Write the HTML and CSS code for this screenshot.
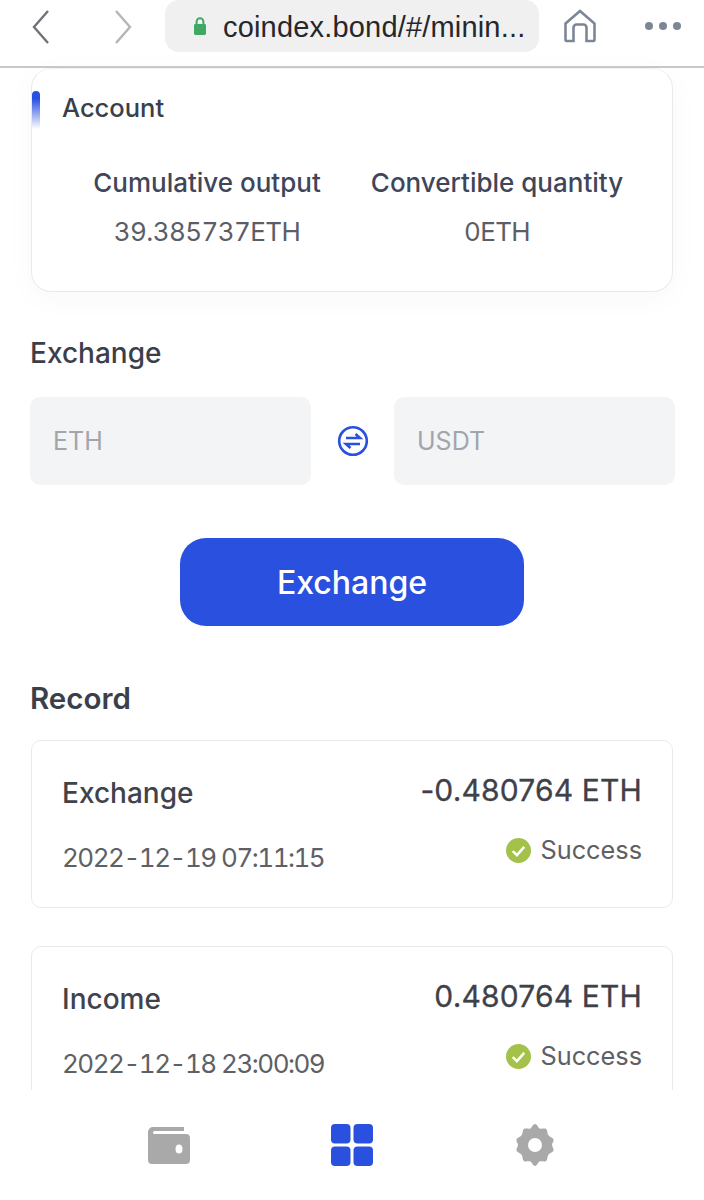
FILE: index.html
```html
<!DOCTYPE html>
<html lang="en">
<head>
<meta charset="utf-8">
<title>coindex.bond mining</title>
<link rel="stylesheet" href="styles.css">
</head>
<body>
<div class="phone">
  <header class="browser">
    <svg class="nav-arrow back" viewBox="0 0 20 36"><path d="M17 2 3 18l14 16"/></svg>
    <svg class="nav-arrow forward" viewBox="0 0 20 36"><path d="M3 2l14 16L3 34"/></svg>
    <div class="url">
      <svg class="lock" viewBox="0 0 14 20"><path class="shackle" d="M3.6 9V5.6a3.4 3.4 0 0 1 6.800 0V9"/><rect x="1" y="8" width="12" height="11" rx="1.4"/></svg>
      <span class="url-text">coindex.bond/#/minin...</span>
    </div>
    <svg class="home" viewBox="0 0 34 34"><path d="M2.500 14.500 17 2l14.500 12.500V31a1 1 0 0 1-1 1h-7V18.500a3 3 0 0 0-3-3h-7a3 3 0 0 0-3 3V32h-7a1 1 0 0 1-1-1z"/></svg>
    <div class="dots"><i></i><i></i><i></i></div>
  </header>

  <main class="content">
    <section class="account">
      <h2 class="account-title">Account</h2>
      <div class="stats">
        <div class="stat stat-a"><div class="stat-label">Cumulative output</div><div class="stat-value">39.385737ETH</div></div>
        <div class="stat stat-b"><div class="stat-label">Convertible quantity</div><div class="stat-value">0ETH</div></div>
      </div>
    </section>

    <h3 class="exchange-title">Exchange</h3>
    <div class="exchange-row">
      <div class="field">ETH</div>
      <svg class="swap" viewBox="0 0 32 32"><circle cx="16" cy="16" r="13.800"/><path d="M9 13h14l-4.500-4M23 19H9l4.500 4"/></svg>
      <div class="field">USDT</div>
    </div>
    <div class="button-row"><button class="exchange-btn">Exchange</button></div>

    <h3 class="record-title">Record</h3>
    <article class="record">
      <div class="record-col">
        <div class="record-type">Exchange</div>
        <div class="record-date">2022-12-19 07:11:15</div>
      </div>
      <div class="record-col right">
        <div class="record-amount">-0.480764 ETH</div>
        <div class="record-status"><svg class="check" viewBox="0 0 24 24"><circle cx="12" cy="12" r="12"/><path d="M6.500 12.500l4 4 7-8"/></svg>Success</div>
      </div>
    </article>
    <article class="record">
      <div class="record-col">
        <div class="record-type">Income</div>
        <div class="record-date">2022-12-18 23:00:09</div>
      </div>
      <div class="record-col right">
        <div class="record-amount">0.480764 ETH</div>
        <div class="record-status"><svg class="check" viewBox="0 0 24 24"><circle cx="12" cy="12" r="12"/><path d="M6.500 12.500l4 4 7-8"/></svg>Success</div>
      </div>
    </article>
  </main>

  <nav class="tabbar">
    <svg class="tab tab-wallet" viewBox="0 0 42 38"><path d="M5 1h31v4H6.500a1.500 1.500 0 0 0 0 3H38a4 4 0 0 1 4 4v22a4 4 0 0 1-4 4H4a4 4 0 0 1-4-4V6a5 5 0 0 1 5-5z"/><ellipse class="hole" cx="31" cy="23" rx="3.500" ry="4.500"/></svg>
    <svg class="tab tab-grid" viewBox="0 0 42 42"><rect width="19.500" height="19.500" rx="4"/><rect x="22.500" width="19.500" height="19.500" rx="4"/><rect y="22.500" width="19.500" height="19.500" rx="4"/><rect x="22.500" y="22.500" width="19.500" height="19.500" rx="4"/></svg>
    <svg class="tab tab-gear" viewBox="0 0 42 42"><path d="M21 0c2 0 3 3 4.500 4.500 2 .8 5-.6 6.700.6 1.500 1.200.8 4 2 6 1 1.700 4.800 2.500 5.300 4.500.6 2-1.500 3.500-1.500 5.400s2.100 3.400 1.500 5.400c-.5 2-4.300 2.800-5.300 4.500-1.200 2-.5 4.800-2 6-1.700 1.200-4.700-.2-6.700.6C24 38 23 42 21 42s-3-4-4.500-4.500c-2-.8-5 .6-6.700-.6-1.500-1.200-.8-4-2-6-1-1.700-4.800-2.500-5.300-4.500-.6-2 1.500-3.500 1.500-5.400S1.900 17.600 2.500 15.600c.5-2 4.300-2.800 5.300-4.500 1.200-2 .5-4.800 2-6 1.700-1.200 4.700.2 6.700-.6C18 3 19 0 21 0z"/><circle class="hole" cx="21" cy="21" r="7"/></svg>
  </nav>
</div>
</body>
</html>
```

FILE: styles.css
```css
* { box-sizing: border-box; }
html, body { margin: 0; padding: 0; }
body { font-family: Inter, "Noto Sans", "Liberation Sans", sans-serif; background: #fff; color: #3a3f4b; }
.phone { position: relative; width: 704px; height: 1200px; overflow: hidden; background: #fff; }

.browser { height: 68px; border-bottom: 2px solid #c9c9c9; display: flex; align-items: center; position: relative; padding-bottom: 12px; }
.nav-arrow { width: 20px; height: 36px; fill: none; stroke-width: 2.4; position: absolute; top: 9px; }
.nav-arrow.back { left: 31px; stroke: #6f7276; }
.nav-arrow.forward { left: 113px; stroke: #b4b5b7; }
.url { position: absolute; left: 165px; top: 0; width: 374px; height: 52px; border-radius: 14px; background: #f0f0f0; display: flex; align-items: center; padding-left: 27px; padding-top: 3px; }
.lock { width: 16px; height: 20px; margin-right: 15px; flex: none; margin-top: -3px; }
.lock rect { fill: #3fa862; }
.lock .shackle { fill: none; stroke: #3fa862; stroke-width: 2; }
.url-text { font-family: "Liberation Sans", Arial, sans-serif; font-size: 29px; letter-spacing: .18px; color: #26272b; white-space: nowrap; }
.home { position: absolute; left: 563px; top: 9px; width: 34px; height: 34px; fill: none; stroke: #7d8698; stroke-width: 2.600; }
.dots { position: absolute; left: 645px; top: 22px; display: flex; gap: 6px; }
.dots i { width: 8px; height: 8px; border-radius: 50%; background: #7d8698; }

.content { padding: 0 29px 0 31px; }
.account { height: 224px; width: 642px; border: 1px solid #eaeaec; border-top-color: #f2f2f3; border-radius: 20px; position: relative; box-shadow: 0 6px 30px rgba(60, 60, 80, .03); }
.account::before { content: ""; position: absolute; left: 0; top: 22px; width: 8px; height: 38px; border-radius: 4px 4px 0 0; background: linear-gradient(#2a50e0 0%, #2a50e0 20%, #fff 100%); }
.account-title { margin: 0; padding: 24px 0 0 30px; font-size: 25.500px; font-weight: 500; line-height: 30px; color: #3a3f4b; }
.stats { display: flex; margin-top: 45px; }
.stat { text-align: center; }
.stat-a { margin-left: 45px; width: 260px; }
.stat-b { margin-left: 15px; width: 290px; }
.stat-label { font-size: 26px; font-weight: 500; line-height: 30px; color: #40465a; white-space: nowrap; }
.stat-value { font-size: 26px; font-weight: 400; font-variant-numeric: tabular-nums; letter-spacing: -.6px; line-height: 30px; margin-top: 19px; color: #5b5e66; white-space: nowrap; }

.exchange-title { margin: 45px 0 0 -1px; font-size: 28px; font-weight: 500; line-height: 32px; color: #3a3f4b; }
.exchange-row { margin: 28px 0 0 -1px; display: flex; align-items: center; justify-content: space-between; }
.field { width: 281px; height: 88px; border-radius: 10px; background: #f3f4f6; padding-left: 23px; font-size: 25px; line-height: 88px; color: #a2a5ab; }
.swap { width: 32px; height: 32px; fill: none; stroke: #2a50e0; stroke-width: 2.600; }
.button-row { margin-top: 53px; display: flex; justify-content: center; padding-right: 2px; }
.exchange-btn { width: 344px; height: 88px; border: 0; border-radius: 26px; background: #2a50e0; color: #fff; font-family: inherit; font-size: 32px; font-weight: 500; }

.record-title { margin: 56px 0 0 -1px; font-size: 29.500px; font-weight: 600; line-height: 32px; color: #3a3f4b; }
.record { width: 642px; height: 168px; margin: 26px 0 38px; border: 1px solid #eaeaec; border-radius: 10px; display: flex; justify-content: space-between; padding: 0 30px 0 31px; }
.record + .record { margin-top: 0; }
.record-col { display: flex; flex-direction: column; }
.record-col.right { align-items: flex-end; }
.record-type { margin-top: 36px; font-size: 28px; font-weight: 500; line-height: 32px; color: #40434c; margin-left: -1px; }
.record-date { margin-top: 34px; margin-left: -1px; font-size: 26px; font-variant-numeric: tabular-nums; letter-spacing: -1.500px; line-height: 30px; color: #5e6066; white-space: nowrap; }
.record-amount { margin-top: 32px; font-size: 30px; font-weight: 400; letter-spacing: .16px; -webkit-text-stroke: .3px #3f4148; line-height: 34px; color: #3f4148; white-space: nowrap; }
.record-status { margin-top: 28px; font-size: 25.300px; line-height: 30px; color: #5e6066; display: flex; align-items: center; gap: 9px; }
.check { width: 25px; height: 25px; }
.check circle { fill: #a4c14a; }
.check path { fill: none; stroke: #fff; stroke-width: 2.400; }

.tabbar { position: absolute; left: 0; right: 0; bottom: 0; height: 110px; background: #fff; }
.tab { position: absolute; }
.tab-wallet { left: 148px; top: 36px; width: 42px; height: 38px; fill: #a9a9a9; }
.tab-grid { left: 331px; top: 34px; width: 42px; height: 42px; fill: #2a50e0; }
.tab-gear { left: 514px; top: 34px; width: 42px; height: 42px; fill: #a9a9a9; }
.hole { fill: #fff; }
```
